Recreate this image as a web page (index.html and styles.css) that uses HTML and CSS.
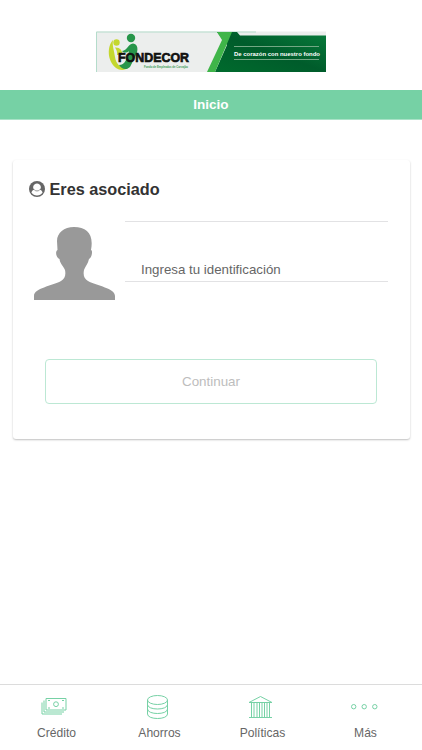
FILE: index.html
```
<!DOCTYPE html>
<html lang="es">
<head>
    <meta charset="UTF-8">
    <meta name="viewport" content="width=device-width, initial-scale=1.0">
    <title>Fondecor</title>
    <link rel="stylesheet" href="styles.css">
</head>
<body>
    <header class="header">
        <svg class="banner" viewBox="0 0 230 41" role="img" aria-label="Fondecor">
            <defs>
                <linearGradient id="verde" x1="0" y1="1" x2="1" y2="0">
                    <stop offset="0" stop-color="#006b2d"/>
                    <stop offset="0.5" stop-color="#005c2b"/>
                    <stop offset="1" stop-color="#087b3b"/>
                </linearGradient>
            </defs>
            <rect y="0.5" width="230" height="40.5" fill="#eceeed"/>
            <path d="M0.5 41V1H160" fill="none" stroke="#b4dccb" stroke-width="1"/>
            <path d="M121 1H141L144 4.5H230V41H119L131 14Z" fill="url(#verde)"/>
            <path d="M121 1H136L119 41H111L126 9Z" fill="#3fb549"/>
            <!-- personas del logo -->
            <circle cx="35" cy="7" r="4.2" fill="#27964a"/>
            <circle cx="20.5" cy="11.5" r="3.2" fill="#c4d72e"/>
            <path d="M17 9C11 15 11 30 20 37C24 40 30 39 32 37C24 37 20 33 19 26C18 19 16 14 17 9Z" fill="#c4d72e"/>
            <path d="M19 16.5C23.5 16 26.5 19 26.5 24H21C21.5 21 20.5 19 19 16.5Z" fill="#c4d72e"/>
            <path d="M26 20C32 19 32 13 37 12.5C42 13 42.5 19 40 24L34 36C31 39 26 39 23 34C29 34 31 28 33 20C31 22 28 22 26 20Z" fill="#27964a"/>
            <text class="logo-name" x="22" y="31" textLength="71" lengthAdjust="spacingAndGlyphs">FONDECOR</text>
            <text class="logo-sub" x="48" y="36.5" textLength="44" lengthAdjust="spacingAndGlyphs">Fondo de Empleados de Corvajbo</text>
            <path d="M138 15.5H223M138 28.5H223" stroke="#73a884" stroke-width="1"/>
            <text class="slogan" x="138" y="24.5" textLength="86" lengthAdjust="spacingAndGlyphs">De corazón con nuestro fondo</text>
        </svg>
    </header>

    <h1 class="title-bar">Inicio</h1>

    <main class="content">
        <section class="card">
            <h2 class="card-title">
                <svg class="user-icon" viewBox="0 0 16 16">
                    <circle cx="8" cy="8" r="8" fill="#666"/>
                    <path d="M2.4 11.6C2.9 9.6 4 8.9 5.2 8.7A3.7 3.7 0 1 1 10.8 8.7C12 8.9 13.1 9.6 13.6 11.6A6.7 6.7 0 0 1 2.4 11.6Z" fill="#fff"/>
                    <path d="M5.2 8.7C6.8 10.4 9.2 10.4 10.8 8.7" fill="none" stroke="#666" stroke-width="0.7"/>
                </svg>
                Eres asociado
            </h2>
            <div class="form-row">
                <svg class="avatar" viewBox="0 0 81 73">
                    <path d="M40 0C30 0 23 6 23 14L23.5 23C21 24 22 31 25.5 32C26 37 30 40 31 43C32 48 31 52 27 54C18 59 0 61 0 69V73H81V69C81 61 63 59 54 54C50 52 49 48 50 43C51 40 54 37 55 32C58 31 59 23 57 23C60 7 53 0 40 0Z" fill="#999"/>
                </svg>
                <div class="field">
                    <input class="field-input" type="text" placeholder="Ingresa tu identificación">
                </div>
            </div>
            <button class="btn-continuar" disabled>Continuar</button>
        </section>
    </main>

    <nav class="tabs">
        <a class="tab">
            <svg class="tab-icon" viewBox="0 0 28 28">
                <path d="M4 6.5H24V18H4Z"/>
                <path d="M2 8.5V20H22M0 10.5V22H20"/>
                <circle cx="14" cy="12.2" r="2.4"/>
                <path d="M6 8.5H8M20 8.5H22M6 16H8M20 16H22"/>
            </svg>
            Crédito
        </a>
        <a class="tab">
            <svg class="tab-icon" viewBox="0 0 28 28">
                <ellipse cx="12.5" cy="8" rx="10" ry="4.5"/>
                <path d="M2.5 8V22C2.5 28 22.5 28 22.5 22V8"/>
                <path d="M2.5 12.5C2.5 18.5 22.5 18.5 22.5 12.5M2.5 17C2.5 23 22.5 23 22.5 17"/>
            </svg>
            Ahorros
        </a>
        <a class="tab">
            <svg class="tab-icon" viewBox="0 0 28 28">
                <path d="M1 10.5L12.5 4.5L24 10.5ZM1 25.5H24"/>
                <path d="M3.5 10.5V25M6 10.5V25M9 10.5V25M11.5 10.5V25M14 10.5V25M16.5 10.5V25M19 10.5V25M21.5 10.5V25"/>
            </svg>
            Políticas
        </a>
        <a class="tab">
            <svg class="tab-icon" viewBox="0 0 28 28">
                <circle cx="2.7" cy="14.7" r="2.2"/>
                <circle cx="13.2" cy="14.7" r="2.2"/>
                <circle cx="23.8" cy="14.7" r="2.2"/>
            </svg>
            Más
        </a>
    </nav>
</body>
</html>
```
FILE: styles.css
```
* {
    margin: 0;
    padding: 0;
    box-sizing: border-box;
}

body {
    height: 100vh;
    display: flex;
    flex-direction: column;
    background-color: #fff;
    font-family: 'Liberation Sans', Arial, sans-serif;
    color: #666;
    overflow: hidden;
}

.header {
    height: 90px;
    padding: 31px 0 0 96px;
}

.banner {
    display: block;
    width: 230px;
    height: 41px;
}

.logo-name {
    font: bold 13.5px 'Liberation Sans', sans-serif;
    fill: #111;
    stroke: #111;
    stroke-width: 0.7;
}

.logo-sub {
    font: bold 3.6px 'Liberation Sans', sans-serif;
    fill: #3d9b57;
}

.slogan {
    font: bold 6.2px 'Liberation Sans', sans-serif;
    fill: #fff;
}

.title-bar {
    height: 30px;
    line-height: 30px;
    background-color: #76d1a5;
    border-bottom: 1px solid #a9e2c7;
    color: #fff;
    font-size: 13.5px;
    text-align: center;
}

.content {
    flex: 1;
    padding: 40px 12.5px 0;
}

.card {
    height: 278.5px;
    padding: 20px 21.5px 0 16.5px;
    border-radius: 3px;
    box-shadow: 0 1px 2px rgba(0, 0, 0, 0.25);
}

.card-title {
    display: flex;
    align-items: center;
    gap: 4.5px;
    height: 19px;
    font-size: 16.25px;
    color: #333;
}

.user-icon {
    width: 16px;
    height: 16px;
    margin-top: -1px;
}

.form-row {
    display: flex;
    gap: 10px;
    margin: 22px 0 0 5px;
}

.avatar {
    width: 81px;
    height: 73px;
    margin-top: 6.4px;
}

.field {
    flex: 1;
    height: 61px;
    padding: 36px 0 0 16px;
    border-top: 1px solid #e2e2e4;
    border-bottom: 1px solid #e2e2e4;
}

.field-input {
    display: block;
    width: 100%;
    height: 22px;
    border: none;
    outline: none;
    background: transparent;
    font-family: inherit;
    font-size: 13.3px;
    color: #666;
}

.field-input::placeholder {
    color: #666;
}

.btn-continuar {
    display: block;
    width: 332px;
    height: 45px;
    margin: 58.5px 0 0 16px;
    border: 1px solid #bce8d4;
    border-radius: 4px;
    background-color: #fff;
    color: #bdbdbd;
    font-family: inherit;
    font-size: 13.4px;
}

.tabs {
    display: flex;
    height: 66px;
    padding: 7px 5px 0;
    border-top: 1px solid #dcdcdc;
}

.tab {
    flex: 1;
    display: flex;
    flex-direction: column;
    align-items: center;
    gap: 5px;
    font-size: 12.1px;
    line-height: 16px;
}

.tab-icon {
    width: 28px;
    height: 28px;
    margin-right: 2px;
    fill: none;
    stroke: #76d1a5;
    stroke-width: 1;
    overflow: visible;
}
```
